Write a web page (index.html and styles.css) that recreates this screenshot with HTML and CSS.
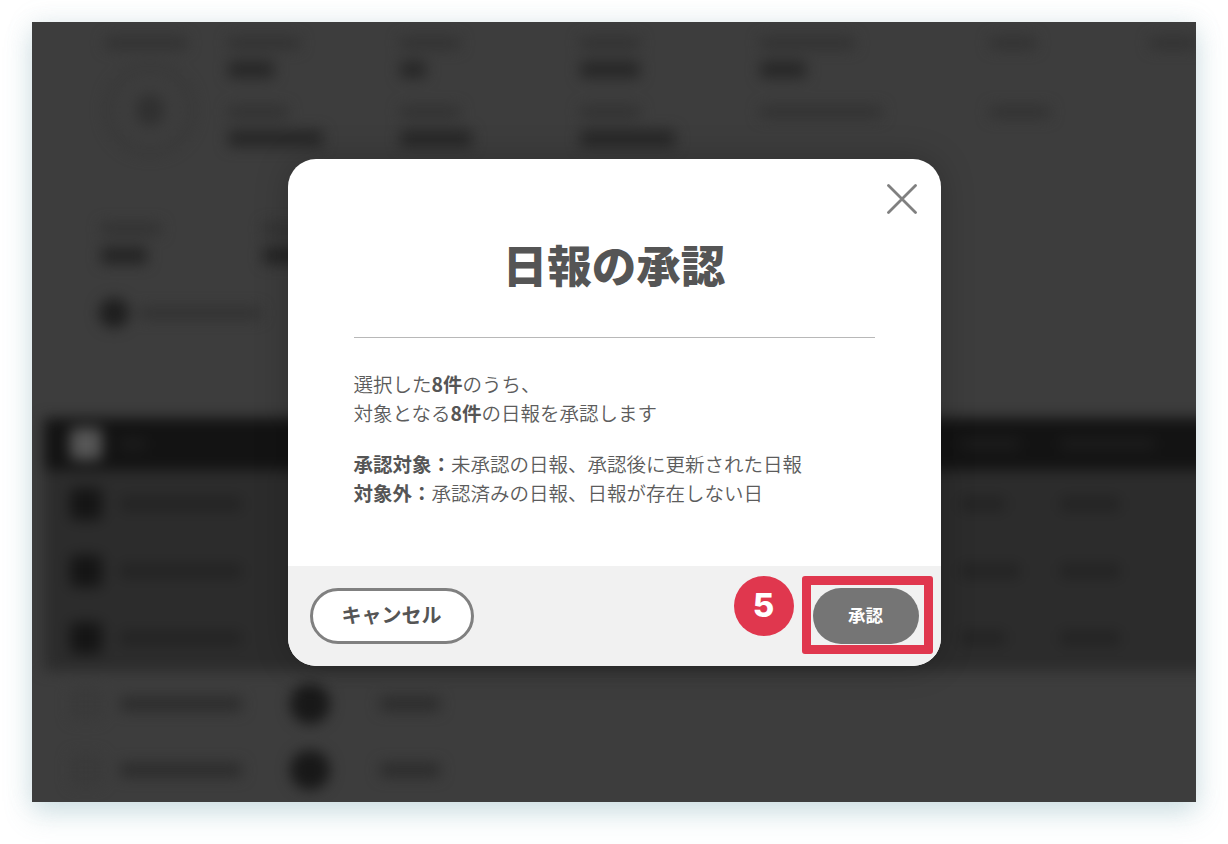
FILE: index.html
```html
<!DOCTYPE html>
<html lang="ja">
<head>
<meta charset="utf-8">
<title>日報の承認</title>
<link rel="stylesheet" href="styles.css">
</head>
<body>
<main class="shot">
  <div class="backdrop" aria-hidden="true">
    <section class="head">
      <div class="stats">
        <div class="col col-1"><i class="bar label w80"></i><div class="ring"><i class="ring-dot"></i></div></div>
        <div class="col col-2"><i class="bar label w70"></i><i class="bar val w45"></i><i class="bar label w60"></i><i class="bar val w95"></i></div>
        <div class="col col-3"><i class="bar label w60"></i><i class="bar val w25"></i><i class="bar label w60"></i><i class="bar val w70"></i></div>
        <div class="col col-3"><i class="bar label w60"></i><i class="bar val w60"></i><i class="bar label w60"></i><i class="bar val w95"></i></div>
        <div class="col col-5"><i class="bar label w95"></i><i class="bar val w45"></i><i class="bar label w120"></i></div>
        <div class="col col-6"><i class="bar label w45"></i><i class="bar val none"></i><i class="bar label w60"></i></div>
        <div class="col"><i class="bar label w45"></i></div>
      </div>
      <div class="second">
        <div class="col col-second"><i class="bar label w60"></i><i class="bar val w45"></i></div>
        <div class="col"><i class="bar label w60"></i><i class="bar val w45"></i></div>
      </div>
      <div class="note"><i class="note-dot"></i><i class="bar label w120"></i></div>
    </section>
    <section class="table">
      <div class="row row-head"><i class="check check-head"></i><i class="bar hbar w25"></i><i></i><i></i><i class="bar hbar w60"></i><i class="bar hbar w95"></i></div>
      <div class="row row-selected"><i class="check check-on"></i><i class="bar rbar w120"></i><i></i><i></i><i class="bar rbar w45"></i><i class="bar rbar w60"></i></div>
      <div class="row row-selected"><i class="check check-on"></i><i class="bar rbar w120"></i><i></i><i></i><i class="bar rbar w60"></i><i class="bar rbar w60"></i></div>
      <div class="row row-selected"><i class="check check-on"></i><i class="bar rbar w120"></i><i></i><i></i><i class="bar rbar w45"></i><i class="bar rbar w60"></i></div>
      <div class="row"><i class="check"></i><i class="bar rbar2 w120"></i><i class="avatar"></i><i class="bar rbar2 w60"></i></div>
      <div class="row"><i class="check"></i><i class="bar rbar2 w120"></i><i class="avatar"></i><i class="bar rbar2 w60"></i></div>
    </section>
  </div>

  <div class="overlay">
    <div class="modal" role="dialog" aria-labelledby="modal-title">
      <button class="close" type="button" aria-label="閉じる">
        <svg viewBox="0 0 30 30" width="30" height="30"><path d="M1.500 1.500 28.500 28.500M28.500 1.500 1.500 28.500" fill="none" stroke="#808080" stroke-width="2.8" stroke-linecap="round"/></svg>
      </button>
      <div class="modal-body">
        <h1 id="modal-title" class="title">日報の承認</h1>
        <hr class="rule">
        <p class="lead">選択した<b>8件</b>のうち、<br>対象となる<b>8件</b>の日報を承認します</p>
        <p class="detail"><b>承認対象：</b>未承認の日報、承認後に更新された日報<br><b>対象外：</b>承認済みの日報、日報が存在しない日</p>
      </div>
      <div class="modal-foot">
        <button class="btn btn-cancel" type="button">キャンセル</button>
        <button class="btn btn-ok" type="button">承認</button>
        <span class="step">5</span>
        <span class="highlight"></span>
      </div>
    </div>
  </div>
</main>
</body>
</html>
```
FILE: styles.css
```css
* { box-sizing: border-box; }
html, body { margin: 0; padding: 0; background: #fff; }
body {
  width: 1228px;
  height: 844px;
  overflow: hidden;
  padding: 22px 32px 0;
  font-family: "Noto Sans CJK JP", "Noto Sans", sans-serif;
}
.shot {
  position: relative;
  width: 1164px;
  height: 780px;
  background: #3d3d3d;
  box-shadow: 0 12px 26px rgba(120, 170, 180, .3), 0 0 24px rgba(150, 180, 190, .18);
}
.backdrop {
  position: absolute;
  inset: 0;
  overflow: hidden;
}
.backdrop > * { filter: blur(7px); }
.backdrop i { display: block; }

.head { height: 398px; }
.stats { display: flex; padding: 15px 0 0 73px; height: 196px; }
.col { display: flex; flex-direction: column; align-items: flex-start; }
.col-1 { width: 123px; }
.col-2 { width: 172px; }
.col-3 { width: 180px; }
.col-5 { width: 230px; }
.col-6 { width: 160px; }
.bar { border-radius: 4px; flex: none; }
.label { height: 12px; background: #323232; margin-bottom: 12px; }
.val { height: 17px; background: #272727; margin-bottom: 28px; }
.val.none { background: transparent; }
.w25 { width: 26px; }
.w45 { width: 46px; }
.w60 { width: 60px; }
.w70 { width: 72px; }
.w80 { width: 82px; }
.w95 { width: 95px; }
.w120 { width: 122px; }
.ring {
  width: 90px;
  height: 90px;
  margin-top: 4px;
  border: 5px solid #363636;
  border-radius: 50%;
  display: flex;
  align-items: center;
  justify-content: center;
}
.ring-dot { width: 28px; height: 32px; border-radius: 50%; background: #303030; }
.second { display: flex; padding: 5px 0 0 69px; }
.col-second { width: 162px; }
.second .val { margin-bottom: 26px; background: #242424; }
.note { display: flex; align-items: center; gap: 10px; padding: 8px 0 0 67px; }
.note-dot { width: 30px; height: 30px; border-radius: 50%; background: #1e1e1e; }
.note .label { margin: 0; }

.table { margin: -2px -24px 0 12px; }
.row {
  display: grid;
  grid-template-columns: 50px 170px 90px 580px 100px 120px;
  align-items: center;
  padding-left: 26px;
  height: 66px;
}
.row-head { height: 52px; background: #131313; }
.row-selected { height: 67px; background: #2c2c2c; }
.check { width: 32px; height: 32px; border-radius: 5px; background: #3a3a3a; }
.check-head { background: #565656; }
.check-on { background: #151515; }
.hbar { height: 12px; background: #1c1c1c; }
.rbar { height: 14px; background: #232323; }
.rbar2 { height: 14px; background: #2c2c2c; }
.avatar { width: 40px; height: 40px; border-radius: 50%; background: #181818; }

.overlay {
  position: absolute;
  inset: 0;
  display: flex;
  justify-content: center;
  padding-top: 137px;
  align-items: flex-start;
}
.modal {
  position: relative;
  width: 653px;
  height: 507px;
  display: flex;
  flex-direction: column;
  background: #fff;
  border-radius: 28px;
  overflow: hidden;
  box-shadow: 0 0 34px rgba(0, 0, 0, .22);
  color: #555;
}
.close {
  position: absolute;
  top: 25px;
  right: 24px;
  width: 30px;
  height: 30px;
  padding: 0;
  border: 0;
  background: none;
  line-height: 0;
}
.modal-body { flex: 1; padding: 0 66px; }
.title {
  margin: 0;
  height: 178px;
  padding-top: 73px;
  font-size: 44.500px;
  line-height: 64px;
  font-weight: 900;
  text-align: center;
  color: #555;
}
.rule { margin: 0; border: 0; border-top: 1px solid #b8b8b8; }
.lead, .detail {
  margin: 0;
  font-size: 19.500px;
  line-height: 29px;
  font-weight: 350;
  color: #5c5c5c;
  white-space: nowrap;
}
.lead { padding-top: 31px; }
.detail { padding-top: 22px; }
.lead b, .detail b { font-weight: 700; color: #555; }
.modal-foot {
  position: relative;
  height: 100px;
  flex: none;
  background: #f1f1f1;
  display: flex;
  align-items: flex-start;
  justify-content: space-between;
  padding: 22px 22px 0;
}
.btn {
  height: 56px;
  border-radius: 28px;
  font-family: inherit;
  font-weight: 700;
  padding: 0 0 4px;
}
.btn-cancel {
  width: 164px;
  background: #fff;
  border: 3px solid #808080;
  color: #555;
  font-size: 20px;
}
.btn-ok {
  width: 106px;
  background: #757575;
  border: 0;
  color: #fff;
  font-size: 17.500px;
}
.step {
  position: absolute;
  left: 446px;
  top: 10px;
  width: 60px;
  height: 60px;
  border-radius: 50%;
  background: #e0374e;
  color: #fff;
  font-family: "Inter", sans-serif;
  font-weight: 800;
  font-size: 33px;
  line-height: 58px;
  text-align: center;
}
.highlight {
  position: absolute;
  left: 514px;
  top: 10px;
  width: 131px;
  height: 78px;
  border: 9px solid #e0374e;
  border-radius: 3px;
}
```
